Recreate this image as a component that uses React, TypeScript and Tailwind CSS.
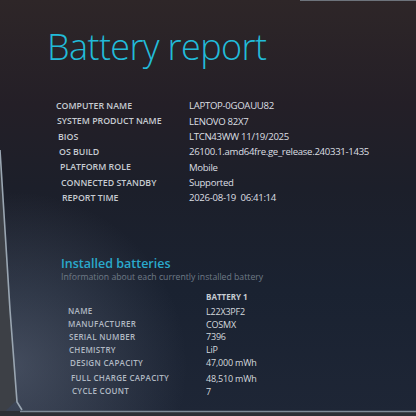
const systemInfo = [
  { label: "COMPUTER NAME", value: "LAPTOP-0GOAUU82", indent: "pl-[56px]", w: "w-[133px]" },
  { label: "SYSTEM PRODUCT NAME", value: "LENOVO 82X7", indent: "pl-[57px]", w: "w-[132px]" },
  { label: "BIOS", value: "LTCN43WW 11/19/2025", indent: "pl-[58px]", w: "w-[131px]" },
  { label: "OS BUILD", value: "26100.1.amd64fre.ge_release.240331-1435", indent: "pl-[59px]", w: "w-[130px]" },
  { label: "PLATFORM ROLE", value: "Mobile", indent: "pl-[60px]", w: "w-[129px]" },
  { label: "CONNECTED STANDBY", value: "Supported", indent: "pl-[61px]", w: "w-[128px]" },
  { label: "REPORT TIME", value: "2026-08-19  06:41:14", indent: "pl-[62px]", w: "w-[127px]" },
];

const batteryInfo = [
  { label: "NAME", value: "L22X3PF2", indent: "pl-[68px]", w: "w-[138px]", gap: "" },
  { label: "MANUFACTURER", value: "COSMX", indent: "pl-[68px]", w: "w-[138px]", gap: "" },
  { label: "SERIAL NUMBER", value: "7396", indent: "pl-[69px]", w: "w-[137px]", gap: "" },
  { label: "CHEMISTRY", value: "LiP", indent: "pl-[69px]", w: "w-[137px]", gap: "" },
  { label: "DESIGN CAPACITY", value: "47,000 mWh", indent: "pl-[70px]", w: "w-[136px]", gap: "" },
  { label: "FULL CHARGE CAPACITY", value: "48,510 mWh", indent: "pl-[71px]", w: "w-[135px]", gap: "mt-[3px]" },
  { label: "CYCLE COUNT", value: "7", indent: "pl-[72px]", w: "w-[134px]", gap: "" },
];

// photo edges of the monitor (bezel seen at bottom / left)
const Bezel = () => (
  <svg className="absolute inset-0 pointer-events-none" width="416" height="416" viewBox="0 0 416 416">
    <polygon points="0,150 10,310 17,400 0,416" fill="#3d4046" />
    <polyline points="0,150 10,310 17,402 22,410" fill="none" stroke="#9aa6b2" strokeWidth="1.6" />
    <rect x="0" y="411" width="416" height="5" fill="#2c2f35" />
    <line x1="20" y1="411.5" x2="416" y2="411.5" stroke="#7f8b98" strokeWidth="1.4" />
    <line x1="300" y1="0.5" x2="416" y2="0.5" stroke="#6d737b" strokeWidth="1" />
  </svg>
);

export default function App() {
  return (
    <div
      className="relative w-[416px] h-[416px] overflow-hidden bg-[radial-gradient(circle_at_3%_88%,rgba(130,140,160,0.38),transparent_32%),linear-gradient(180deg,#2e2628_0%,#241f27_25%,#1c1f2a_45%,#1a2231_70%,#1e2636_100%)]"
      style={{ fontFamily: '"Open Sans", "Noto Sans", sans-serif' }}
    >
      <div className="pt-[23px]">
        <h1 className="pl-[47px] text-[36px] leading-[48px] font-light text-[#22bbd9] tracking-[-0.6px]">
          Battery report
        </h1>

        <div className="mt-[28px] flex flex-col">
          {systemInfo.map((row) => (
            <div key={row.label} className={`flex items-center h-[15.3px] ${row.indent}`}>
              <span className={`${row.w} shrink-0 text-[8.8px] font-semibold text-[#c6cbd1]`}>
                {row.label}
              </span>
              <span className="text-[9.6px] text-[#dcdfe3] tracking-[-0.3px] whitespace-pre">{row.value}</span>
            </div>
          ))}
        </div>

        <div className="mt-[51px] pl-[61px]">
          <h2 className="text-[12.5px] leading-[14px] font-semibold text-[#2aa9cc]">Installed batteries</h2>
          <p className="mt-[1px] text-[8.7px] leading-[11px] text-[#6f7b87]">
            Information about each currently installed battery
          </p>
        </div>

        <div className="mt-[9px] mb-[3px] pl-[206px] text-[8px] leading-[10px] font-bold text-[#c6ccd2]">
          BATTERY 1
        </div>
        <div className="flex flex-col">
          {batteryInfo.map((row) => (
            <div key={row.label} className={`flex items-center h-[12.8px] ${row.indent} ${row.gap}`}>
              <span className={`${row.w} shrink-0 text-[8px] font-semibold text-[#b0b8c2] tracking-[0.3px]`}>
                {row.label}
              </span>
              <span className="text-[9px] text-[#d4d8dd] tracking-[-0.2px]">{row.value}</span>
            </div>
          ))}
        </div>
      </div>
      <Bezel />
    </div>
  );
}
